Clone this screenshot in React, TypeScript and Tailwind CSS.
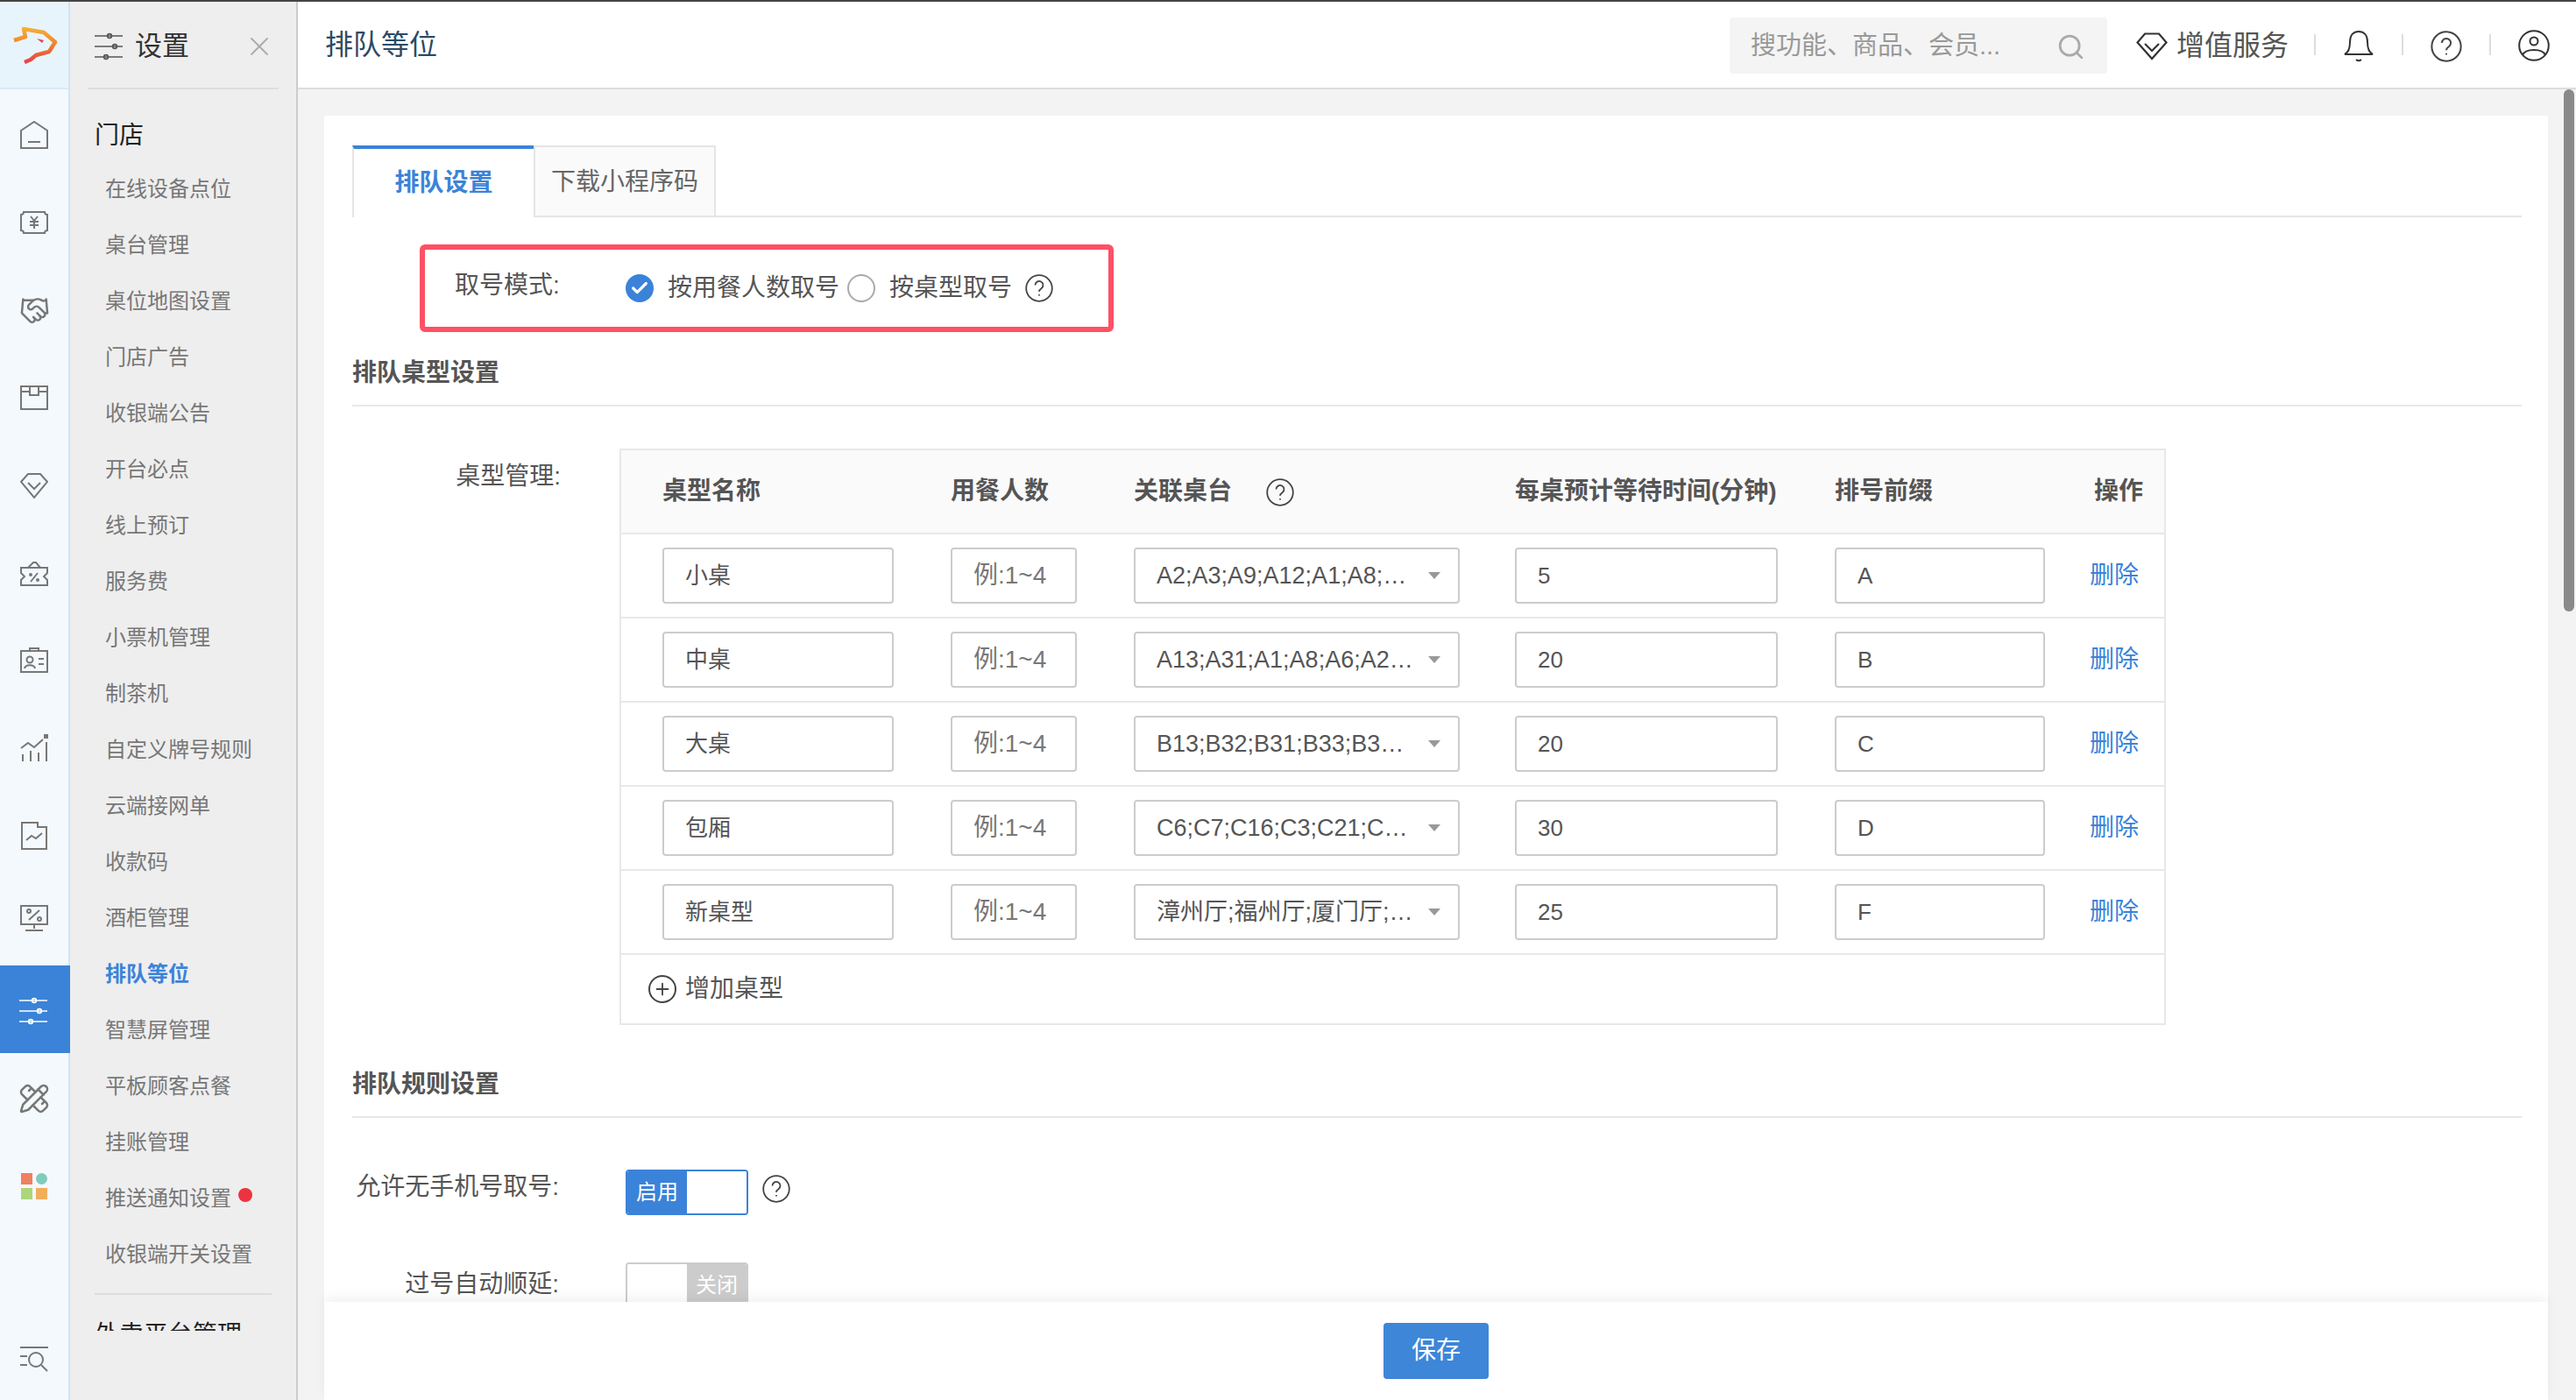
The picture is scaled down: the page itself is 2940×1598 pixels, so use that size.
import React from 'react';
import { Handshake, PencilRuler, Search, X, Check, Plus } from 'lucide-react';

const menuItems = [
  '在线设备点位', '桌台管理', '桌位地图设置', '门店广告', '收银端公告', '开台必点', '线上预订', '服务费', '小票机管理', '制茶机',
  '自定义牌号规则', '云端接网单', '收款码', '酒柜管理', '排队等位', '智慧屏管理', '平板顾客点餐', '挂账管理', '推送通知设置', '收银端开关设置',
];

const rows = [
  { name: '小桌', tables: 'A2;A3;A9;A12;A1;A8;…', wait: '5', prefix: 'A' },
  { name: '中桌', tables: 'A13;A31;A1;A8;A6;A2…', wait: '20', prefix: 'B' },
  { name: '大桌', tables: 'B13;B32;B31;B33;B3…', wait: '20', prefix: 'C' },
  { name: '包厢', tables: 'C6;C7;C16;C3;C21;C…', wait: '30', prefix: 'D' },
  { name: '新桌型', tables: '漳州厅;福州厅;厦门厅;…', wait: '25', prefix: 'F' },
];

const Ico = ({ children, size = 32 }: { children: React.ReactNode; size?: number }) => (
  <svg width={size} height={size} viewBox="0 0 32 32" fill="none" stroke="currentColor" strokeWidth={2}>
    {children}
  </svg>
);

const SlidersIcon = () => (
  <Ico>
    <path d="M0 4h32M0 16h32M0 28h32" strokeWidth={1.6} />
    <circle cx="17" cy="4" r="2.4" strokeWidth={1.6} />
    <circle cx="23" cy="16" r="2.4" strokeWidth={1.6} />
    <circle cx="13" cy="28" r="2.4" strokeWidth={1.6} />
  </Ico>
);

const railIcons: React.ReactNode[] = [
  <Ico><path d="M1 31V11L16 1l15 10v20z" /><path d="M9 24h14" /></Ico>,
  <Ico><path d="M4 4h24a3 3 0 0 0 3 3v18a3 3 0 0 0-3 3H4a3 3 0 0 0-3-3V7a3 3 0 0 0 3-3z" /><path d="M12 9l4 5 4-5M11 15h10M11 19h10M16 14v9" /></Ico>,
  <Handshake size={35} strokeWidth={1.7} />,
  <Ico><path d="M1 3h30v26H1z" /><path d="M11 3v10h10V3M1 9h10M21 9h10" /></Ico>,
  <Ico><path d="M9 3h14l8 9-15 18L1 12z" /><path d="M9 13l7 7 7-7" /></Ico>,
  <Ico><path d="M1 10h30v6l-4 4 4 4v6H1v-6l4-4-4-4z" /><path d="M9 10l6-6h3l5 6M12 26l8-10" /><circle cx="12" cy="18" r="1" /><circle cx="20" cy="24" r="1" /></Ico>,
  <Ico><rect x="1" y="5" width="30" height="24" /><path d="M11 5V2h10v3M5 25c1-5 11-5 12 0M21 14h6M21 20h6" /><circle cx="11" cy="15" r="3.5" /></Ico>,
  <Ico><path d="M3 31v-8M12 31V19M21 31V21M30 31V9" /><path d="M1 16l8-6 7 5 10-9" /><rect x="28" y="1" width="3" height="3" fill="currentColor" /></Ico>,
  <Ico><path d="M2 1h18v5h10v25H2z" /><path d="M7 21l6-5 5 3 7-6" /></Ico>,
  <span className="-mt-[12px]"><Ico><rect x="1" y="2" width="30" height="21" /><path d="M16 23v5M6 30h20M10 18L22 7" /><circle cx="10" cy="8" r="2" /><circle cx="22" cy="17" r="2" /></Ico></span>,
  <SlidersIcon />,
  <PencilRuler size={36} strokeWidth={1.7} />,
  <div className="grid grid-cols-2 gap-[4px] w-[30px]">
    <span className="h-[13px] bg-[#ef8060]" />
    <span className="h-[13px] rounded-full bg-[#80cbbb]" />
    <span className="h-[13px] bg-[#acd67b]" />
    <span className="h-[13px] bg-[#f1ae5d]" />
  </div>,
];

const HelpIcon = ({ size = 32 }: { size?: number }) => (
  <svg width={size} height={size} viewBox="0 0 32 32" fill="none" stroke="#444" strokeWidth={1.8} className="shrink-0">
    <circle cx="16" cy="16" r="14.8" />
    <path d="M11.5 12.5a4.5 4.5 0 1 1 7 3.7c-1.5 1-2.5 1.7-2.5 3.6" />
    <path d="M16 23v1.4" />
  </svg>
);

const Logo = () => (
  <svg width="60" height="50" viewBox="0 0 60 50" fill="none">
    <defs>
      <linearGradient id="logoGrad" x1="0" y1="0" x2="0" y2="50" gradientUnits="userSpaceOnUse">
        <stop offset="0" stopColor="#f7c53f" />
        <stop offset="0.5" stopColor="#f08a2c" />
        <stop offset="1" stopColor="#e53e45" />
      </linearGradient>
    </defs>
    <path d="M2 23l13-4-2-9 23 4 13 11-7 11-15 4-6 5-7 3" stroke="url(#logoGrad)" strokeWidth="4.5" strokeLinejoin="round" />
    <path d="M28 21l8 2-2 3z" fill="#e8435f" />
  </svg>
);

const Field = ({ className, children }: { className: string; children: React.ReactNode }) => (
  <div className={`h-[64px] px-[24px] flex items-center bg-white border-2 border-[#ccc] rounded-[4px] text-[26px] text-[#555] whitespace-nowrap overflow-hidden ${className}`}>
    {children}
  </div>
);

const SectionTitle = ({ children, className }: { children: React.ReactNode; className: string }) => (
  <div className={`text-[28px] leading-[40px] font-bold text-[#555] pb-[16px] border-b-2 border-[#e8e8e8] ${className}`}>{children}</div>
);

const columns = 'grid grid-cols-[329px_209px_435px_365px_291px_1fr] pl-[47px] items-center';

export default function App() {
  return (
    <div className="w-[2940px] h-[1598px] overflow-hidden flex flex-col border-t-2 border-[#444] font-['Liberation_Sans','Noto_Sans_CJK_SC',sans-serif]">
      <div className="flex flex-1 min-h-0">
        {/* icon rail */}
        <div className="w-[80px] shrink-0 flex flex-col bg-[#f4f9fe] border-r-2 border-[#cfe4f5] text-[#777]">
          <div className="h-[100px] flex items-center justify-center bg-[#e8f4fb] border-b-2 border-[#d8e9f5] pl-[10px] pb-[6px]">
            <Logo />
          </div>
          {railIcons.map((icon, i) => (
            <div key={i} className={`h-[100px] pt-[4px] flex items-center justify-center ${i === 10 ? 'bg-[#3b83d8] text-white -mr-[2px] pr-[4px]' : ''}`}>
              {icon}
            </div>
          ))}
          <div className="mt-auto h-[94px] flex items-center justify-center">
            <Ico>
              <path d="M0 3h32M0 13h8M0 23h8" />
              <circle cx="18" cy="17" r="8" />
              <path d="M24 23l7 7" />
            </Ico>
          </div>
        </div>

        {/* settings menu */}
        <div className="w-[260px] shrink-0 bg-[#eee] border-r-2 border-[#ccc] flex flex-col">
          <div className="mx-[20px] h-[100px] shrink-0 flex items-center border-b-2 border-[#ddd] pl-[8px] pt-[4px] text-[#555]">
            <SlidersIcon />
            <span className="ml-[14px] text-[31px] text-[#333]">设置</span>
            <X size={36} strokeWidth={1.2} className="ml-auto mr-[4px] text-[#aaa]" />
          </div>
          <div className="h-[1417px] shrink-0 overflow-hidden pl-[28px]">
            <div className="mt-[33px] h-[40px] text-[28px] leading-[40px] text-[#222]">门店</div>
            <ul className="mt-[9px]">
              {menuItems.map((item) => (
                <li key={item} className={`h-[64px] pl-[12px] flex items-center text-[24px] ${item === '排队等位' ? 'font-bold text-[#3b83d8]' : 'text-[#777]'}`}>
                  {item}
                  {item === '推送通知设置' && <span className="ml-[8px] w-[16px] h-[16px] rounded-full bg-[#ee3340] -translate-y-[4px]" />}
                </li>
              ))}
            </ul>
            <div className="mt-[12px] w-[202px] border-t-2 border-[#ddd]" />
            <div className="mt-[26px] h-[40px] text-[28px] leading-[40px] text-[#222]">外卖平台管理</div>
          </div>
        </div>

        {/* main column */}
        <div className="flex-1 min-w-0 flex flex-col relative bg-[#f3f3f3]">
          <div className="h-[100px] shrink-0 bg-white border-b-2 border-[#ddd] flex items-center pl-[31px]">
            <h1 className="text-[32px] text-[#2c4a66] font-normal">排队等位</h1>
            <div className="ml-auto mt-[2px] pt-[2px] w-[431px] h-[64px] rounded-[4px] bg-[#f4f4f4] flex items-center pl-[24px] pr-[25px] text-[29px] text-[#999]">
              <span>搜功能、商品、会员...</span>
              <Search size={33} strokeWidth={2} className="ml-auto text-[#aaa]" />
            </div>
            <svg width="36" height="32" viewBox="0 0 36 32" fill="none" stroke="#333" strokeWidth={2.2} className="ml-[33px] mt-[4px]">
              <path d="M10 1.5h16l8.500 10L18 30 1.500 11.500z" />
              <path d="M10 13l8 8 8-8" />
            </svg>
            <span className="ml-[10px] mt-[2px] text-[32px] text-[#555]">增值服务</span>
            <div className="ml-[29px] w-[100px] h-[24px] border-l-2 border-[#ddd] flex items-center justify-center">
              <svg width="36" height="38" viewBox="0 0 36 38" fill="none" stroke="#333" strokeWidth={2} className="mt-[4px] shrink-0">
                <path d="M2 28c4-2 6-6 6-14C8 6 12 2 18 2s10 4 10 12c0 8 2 12 6 14z" />
                <path d="M15 34q3 2.500 6 0" />
              </svg>
            </div>
            <div className="w-[100px] h-[24px] border-l-2 border-[#ddd] flex items-center justify-center">
              <span className="mt-[4px]"><HelpIcon size={36} /></span>
            </div>
            <div className="w-[99px] h-[24px] border-l-2 border-[#ddd] flex items-center justify-center">
              <svg width="36" height="36" viewBox="0 0 36 36" fill="none" stroke="#333" strokeWidth={2} className="mt-[2px] shrink-0">
                <circle cx="18" cy="18" r="16.800" />
                <circle cx="18" cy="13" r="4.500" />
                <path d="M5 29c3-8 23-8 26 0" />
              </svg>
            </div>
          </div>

          <div className="flex-1 min-h-0 pt-[30px] pl-[30px] pr-[32px]">
            <div className="h-full bg-white flex flex-col">
              <div className="flex-1 min-h-0 overflow-hidden pt-[34px] pl-[32px] pr-[30px]">
                {/* tabs */}
                <div className="h-[82px] flex border-b-2 border-[#e5e5e5]">
                  <div className="w-[207px] h-[82px] border-t-4 border-l-2 border-t-[#3b83d8] border-l-[#e5e5e5] bg-white flex items-center justify-center text-[28px] font-bold text-[#3b83d8]">
                    排队设置
                  </div>
                  <div className="w-[208px] h-[80px] pt-[2px] border-2 border-b-0 border-[#e5e5e5] bg-[#fafafa] flex items-center justify-center text-[28px] text-[#666]">
                    下载小程序码
                  </div>
                </div>

                {/* highlighted mode row */}
                <div className="mt-[31px] ml-[77px] w-[792px] h-[100px] border-[6px] border-[#ff5064] rounded-[6px] pl-[34px] flex items-center text-[28px] text-[#555]">
                  <span className="w-[121px] -mt-[6px]">取号模式:</span>
                  <span className="ml-[74px] w-[32px] h-[32px] rounded-full bg-[#3b83d8] flex items-center justify-center text-white">
                    <Check size={22} strokeWidth={3.500} />
                  </span>
                  <span className="ml-[16px]">按用餐人数取号</span>
                  <span className="ml-[9px] w-[32px] h-[32px] rounded-full border-2 border-[#aaa]" />
                  <span className="ml-[16px]">按桌型取号</span>
                  <span className="ml-[15px]"><HelpIcon /></span>
                </div>

                <SectionTitle className="mt-[27px]">排队桌型设置</SectionTitle>

                {/* table types */}
                <div className="mt-[48px] flex items-start">
                  <div className="w-[238px] mt-[12px] text-right text-[28px] leading-[40px] text-[#555]">桌型管理:</div>
                  <div className="ml-[67px] w-[1765px] border-2 border-[#e8e8e8]">
                    <div className={`${columns} h-[96px] bg-[#fafafa] border-b-2 border-[#e8e8e8] text-[28px] font-bold text-[#555]`}>
                      <span>桌型名称</span>
                      <span>用餐人数</span>
                      <span className="flex items-center">
                        关联桌台
                        <span className="ml-[39px] mt-[2px] font-normal"><HelpIcon /></span>
                      </span>
                      <span className="whitespace-nowrap">每桌预计等待时间(分钟)</span>
                      <span>排号前缀</span>
                      <span className="pl-[5px]">操作</span>
                    </div>
                    {rows.map((row) => (
                      <div key={row.prefix} className={`${columns} h-[96px] border-b-2 border-[#e8e8e8]`}>
                        <Field className="w-[264px]">{row.name}</Field>
                        <Field className="w-[144px]"><span className="text-[28px] text-[#777]">例:1~4</span></Field>
                        <Field className="w-[372px]">
                          <span className="text-[27px]">{row.tables}</span>
                          <span className="ml-auto -mr-[4px] w-0 h-0 border-x-[7px] border-x-transparent border-t-[8px] border-t-[#999]" />
                        </Field>
                        <Field className="w-[300px]">{row.wait}</Field>
                        <Field className="w-[240px]">{row.prefix}</Field>
                        <span className="text-[28px] text-[#3b83d8]">删除</span>
                      </div>
                    ))}
                    <div className="h-[78px] pl-[31px] flex items-center text-[28px] text-[#555]">
                      <span className="w-[32px] h-[32px] rounded-full border-2 border-[#444] flex items-center justify-center text-[#444]">
                        <Plus size={22} strokeWidth={2} />
                      </span>
                      <span className="ml-[10px]">增加桌型</span>
                    </div>
                  </div>
                </div>

                <SectionTitle className="mt-[48px]">排队规则设置</SectionTitle>

                {/* rules */}
                <div className="mt-[59px] flex items-start">
                  <div className="w-[238px] -ml-[2px] mr-[2px] text-right text-[28px] leading-[40px] text-[#555]">允许无手机号取号:</div>
                  <div className="ml-[74px] w-[140px] h-[52px] flex rounded-[4px] overflow-hidden border-2 border-[#3b83d8]">
                    <span className="w-[68px] bg-[#3b83d8] flex items-center justify-center text-[24px] text-white">启用</span>
                    <span className="flex-1 bg-white" />
                  </div>
                  <span className="ml-[16px] mt-[6px]"><HelpIcon /></span>
                </div>
                <div className="mt-[54px] flex items-start">
                  <div className="w-[238px] -ml-[2px] mr-[2px] mt-[5px] text-right text-[28px] leading-[40px] text-[#555]">过号自动顺延:</div>
                  <div className="ml-[74px] w-[140px] h-[52px] flex rounded-[4px] overflow-hidden border-2 border-[#ccc]">
                    <span className="flex-1 bg-white" />
                    <span className="w-[68px] bg-[#ccc] flex items-center justify-center text-[24px] text-white">关闭</span>
                  </div>
                </div>
              </div>

              {/* save bar */}
              <div className="relative h-[112px] shrink-0 bg-white shadow-[0_-6px_12px_rgba(0,0,0,0.05)] flex items-center justify-center">
                <button className="w-[120px] h-[64px] rounded-[4px] bg-[#3d86d8] text-[28px] text-white">保存</button>
              </div>
            </div>
          </div>

          {/* page scrollbar */}
          <div className="absolute right-[2px] top-[100px] w-[12px] h-[596px] rounded-full bg-[#8a8a8a]" />
        </div>
      </div>
    </div>
  );
}
